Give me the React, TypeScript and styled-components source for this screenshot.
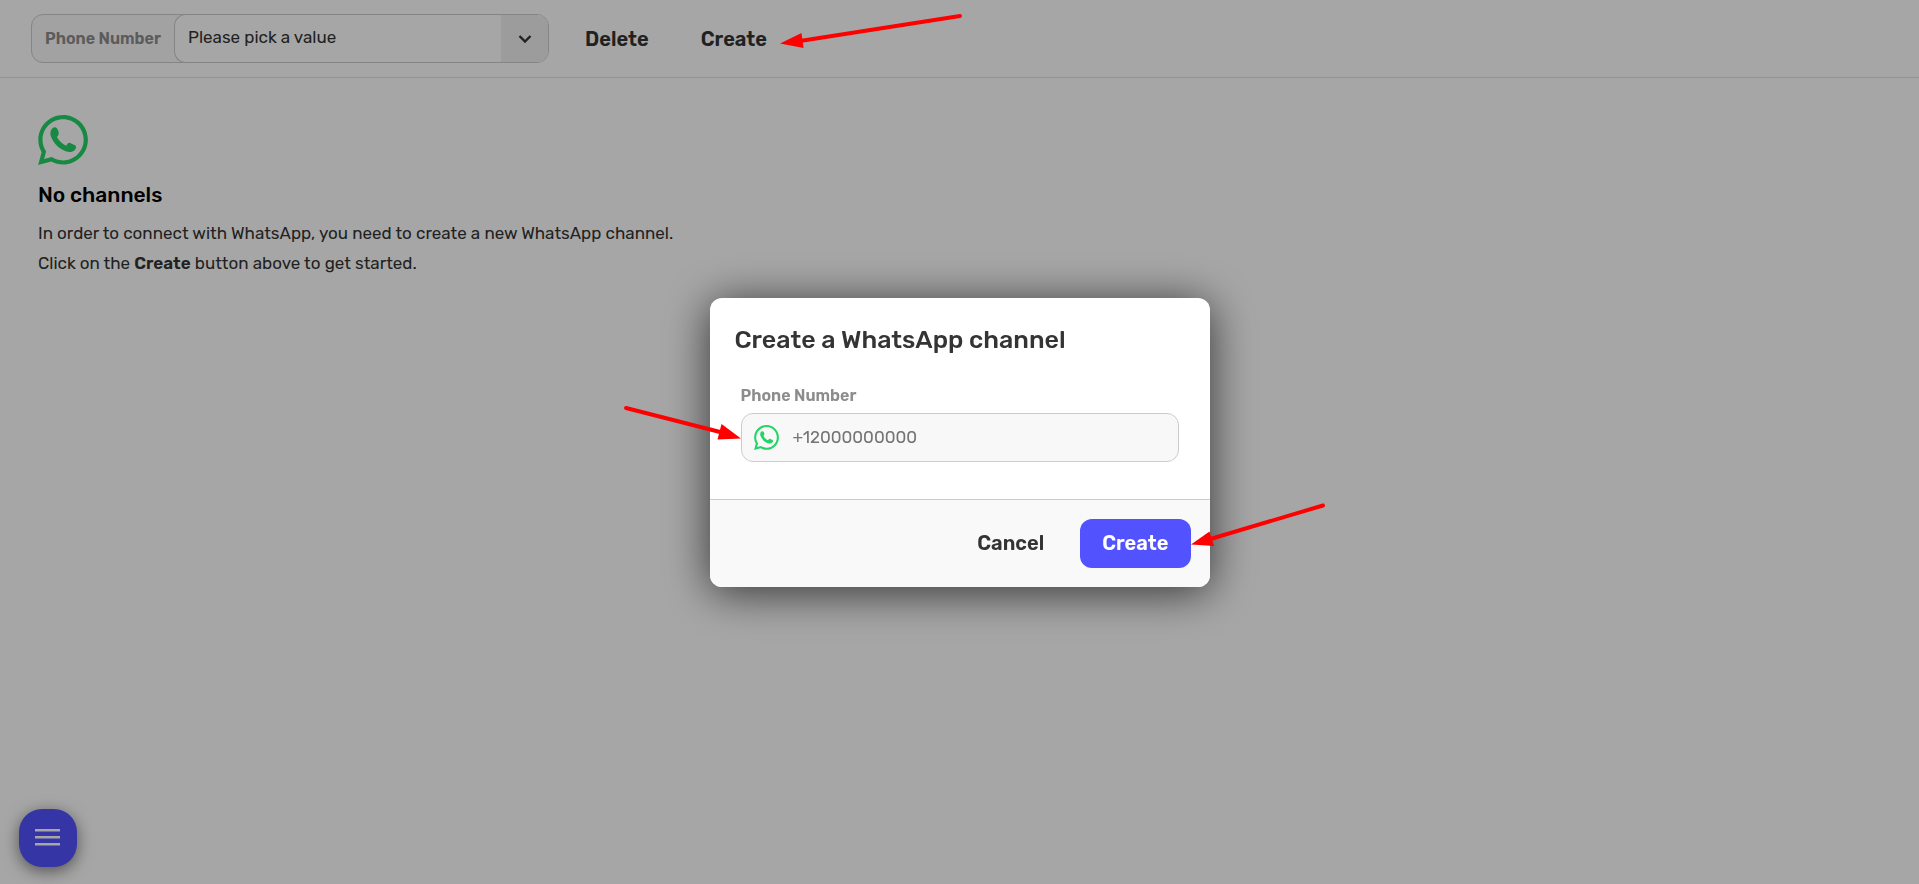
import React from 'react';
import styled, { createGlobalStyle } from 'styled-components';

const GlobalStyle = createGlobalStyle`
  *, *::before, *::after { box-sizing: border-box; }
  body {
    margin: 0;
    background: #fff;
    color: #343434;
    font-family: Rubik, Inter, sans-serif;
    font-size: 17px;
    line-height: 30px;
  }
`;

const Page = styled.div`
  min-height: 100vh;
`;

const Toolbar = styled.header`
  display: flex;
  align-items: center;
  gap: 8px;
  padding: 14px 31px;
  border-bottom: 1px solid #e3e3e3;
`;

const PickerGroup = styled.div`
  display: flex;
  width: 518px;
  height: 49px;
  margin-right: 6px;
  border: 1px solid #ccc;
  border-radius: 12px;
  background: #f9f9f9;
  overflow: hidden;
`;

const FieldLabel = styled.label`
  font-size: 16px;
  font-weight: 600;
  line-height: 20px;
  color: #8c8c8c;
`;

const PickerLabel = styled(FieldLabel)`
  flex: none;
  align-self: center;
  width: 142px;
  padding-left: 13px;
  white-space: nowrap;
`;

const PickerBox = styled.div`
  display: grid;
  grid-template-columns: 1fr 47px;
  flex: 1;
  margin: -1px 0;
  border: 1px solid #ccc;
  border-right: 0;
  border-radius: 12px 0 0 12px;
  background: #fff;
  overflow: hidden;
`;

const Select = styled.select`
  grid-area: 1 / 1 / 2 / 3;
  appearance: none;
  padding: 0 60px 4px 13px;
  border: 0;
  background: transparent;
  color: inherit;
  font: inherit;
`;

const PickerArrow = styled.span`
  grid-area: 1 / 2;
  display: grid;
  place-items: center;
  background: #f0f0f0;
  pointer-events: none;
`;

const Button = styled.button<{ $primary?: boolean }>`
  height: 49px;
  padding: 0 22px;
  border: 0;
  border-radius: 12px;
  background: ${(p) => (p.$primary ? '#5252ff' : 'transparent')};
  color: ${(p) => (p.$primary ? '#fff' : '#343434')};
  font: inherit;
  font-size: 20px;
  font-weight: 600;
  cursor: pointer;
`;

const Content = styled.main`
  padding: 37px 38px;
`;

const Heading = styled.h1`
  margin: 15px 0 8px;
  color: #000;
  font-size: 21px;
  font-weight: 500;
  line-height: 30px;
`;

const Text = styled.p`
  margin: 0;
  strong { font-weight: 600; }
`;

const MenuButton = styled.button`
  position: fixed;
  left: 19px;
  bottom: 17px;
  display: grid;
  place-items: center;
  width: 58px;
  height: 58px;
  padding: 0;
  border: 0;
  border-radius: 23px;
  background: #5252ff;
  box-shadow: 0 4px 16px rgba(0, 0, 0, 0.5);
`;

const Overlay = styled.div`
  position: fixed;
  inset: 0;
  display: grid;
  place-items: center;
  background: rgba(0, 0, 0, 0.35);
`;

const Dialog = styled.form`
  position: relative;
  width: 500px;
  max-width: 100%;
  border-radius: 12px;
  background: #fff;
  box-shadow: 0 5px 45px rgba(0, 0, 0, 0.7);
`;

const DialogTitle = styled.h2`
  margin: 0;
  padding: 26px 25px 0;
  font-size: 25px;
  font-weight: 500;
  line-height: 32px;
`;

const DialogBody = styled.div`
  display: flex;
  flex-direction: column;
  gap: 7px;
  padding: 30px 31px 37px;
`;

const InputBox = styled.div`
  display: flex;
  align-items: center;
  gap: 14px;
  height: 49px;
  padding: 0 12px;
  border: 1px solid #ccc;
  border-radius: 12px;
  background: #f8f8f8;
`;

const Input = styled.input`
  flex: 1;
  min-width: 0;
  padding: 0;
  border: 0;
  outline: 0;
  background: transparent;
  color: inherit;
  font: inherit;
  &::placeholder { color: #757575; opacity: 1; }
`;

const DialogFooter = styled.footer`
  display: flex;
  justify-content: flex-end;
  gap: 14px;
  padding: 19px;
  border-top: 1px solid #ccc;
  border-radius: 0 0 12px 12px;
  background: #f9f9f9;
`;

const Pointer = styled.svg<{ $left: number; $top: number }>`
  position: absolute;
  left: ${(p) => p.$left}px;
  top: ${(p) => p.$top}px;
  overflow: visible;
  pointer-events: none;
`;

const Glyph = styled.svg`
  display: block;
  flex: none;
`;

function WhatsAppIcon({ size }: { size: number }) {
  return (
    <Glyph width={size} height={size} viewBox="0 0 24 24" fill="#25d366" aria-hidden="true">
      <path d="M.057 24l1.687-6.163c-1.041-1.804-1.588-3.849-1.587-5.946.003-6.556 5.338-11.891 11.893-11.891 3.181.001 6.167 1.24 8.413 3.488 2.245 2.248 3.481 5.236 3.48 8.414-.003 6.557-5.338 11.892-11.893 11.892-1.99-.001-3.951-.5-5.688-1.448l-6.305 1.654zm6.597-3.807c1.676.995 3.276 1.591 5.392 1.592 5.448 0 9.886-4.434 9.889-9.885.002-5.462-4.415-9.89-9.881-9.892-5.452 0-9.887 4.434-9.889 9.884-.001 2.225.651 3.891 1.746 5.634l-.999 3.648 3.742-.981z" />
      <path d="M7.6 6C8.6 5.7 9.3 6.3 9.8 7.8C10.2 9 9.9 9.7 9.1 10.5C10.1 12.3 11.5 13.8 13.5 14.7C14 14 14.4 13.2 15.2 13.3L17.8 14.5C18.6 14.9 18.2 16.2 17.6 16.9C16.6 17.9 14.9 18 13.3 17.4C9.9 16.2 7.5 13.5 6.3 10.6C5.6 8.6 6 6.6 7.6 6Z" />
    </Glyph>
  );
}

export default function App() {
  return (
    <Page>
      <GlobalStyle />
      <Toolbar>
        <PickerGroup>
          <PickerLabel htmlFor="channel">Phone Number</PickerLabel>
          <PickerBox>
            <Select id="channel">
              <option>Please pick a value</option>
            </Select>
            <PickerArrow>
              <Glyph width="14" height="10" viewBox="0 0 14 10" fill="none" stroke="#343434" strokeWidth="2.4">
                <path d="M1.5 2L7 7.5L12.5 2" />
              </Glyph>
            </PickerArrow>
          </PickerBox>
        </PickerGroup>
        <Button type="button">Delete</Button>
        <Button type="button">Create</Button>
      </Toolbar>
      <Content>
        <WhatsAppIcon size={50} />
        <Heading>No channels</Heading>
        <Text>In order to connect with WhatsApp, you need to create a new WhatsApp channel.</Text>
        <Text>
          Click on the <strong>Create</strong> button above to get started.
        </Text>
      </Content>
      <MenuButton type="button" aria-label="Menu">
        <Glyph width="26" height="18" viewBox="0 0 26 18" fill="#fff">
          <path d="M0 0h25v2.600H0zM0 7h25v2.600H0zM0 14h25v2.600H0z" />
        </Glyph>
      </MenuButton>
      <Overlay>
        <Dialog role="dialog" aria-labelledby="dialog-title" onSubmit={(e) => e.preventDefault()}>
          <DialogTitle id="dialog-title">Create a WhatsApp channel</DialogTitle>
          <DialogBody>
            <FieldLabel htmlFor="phone">Phone Number</FieldLabel>
            <InputBox>
              <WhatsAppIcon size={25} />
              <Input id="phone" type="tel" placeholder="+12000000000" />
            </InputBox>
          </DialogBody>
          <DialogFooter>
            <Button type="button">Cancel</Button>
            <Button type="submit" $primary>Create</Button>
          </DialogFooter>
          <Pointer $left={-86} $top={108} width="117" height="36" fill="#f00" aria-hidden="true">
            <path d="M2 2L100 27" stroke="#f00" strokeWidth="4" strokeLinecap="round" />
            <path d="M117 32.500L97.500 18L93.500 33.500Z" />
          </Pointer>
          <Pointer $left={481} $top={206} width="136" height="44" fill="#f00" aria-hidden="true">
            <path d="M132 1.500L16 36" stroke="#f00" strokeWidth="4" strokeLinecap="round" />
            <path d="M0 40.500L18.500 27.500L23 42Z" />
          </Pointer>
        </Dialog>
        <Pointer $left={780} $top={14} width="182" height="36" fill="#f00" aria-hidden="true">
          <path d="M180 2L20 27" stroke="#f00" strokeWidth="4" strokeLinecap="round" />
          <path d="M0 29.500L21.500 19L23.500 34Z" />
        </Pointer>
      </Overlay>
    </Page>
  );
}
